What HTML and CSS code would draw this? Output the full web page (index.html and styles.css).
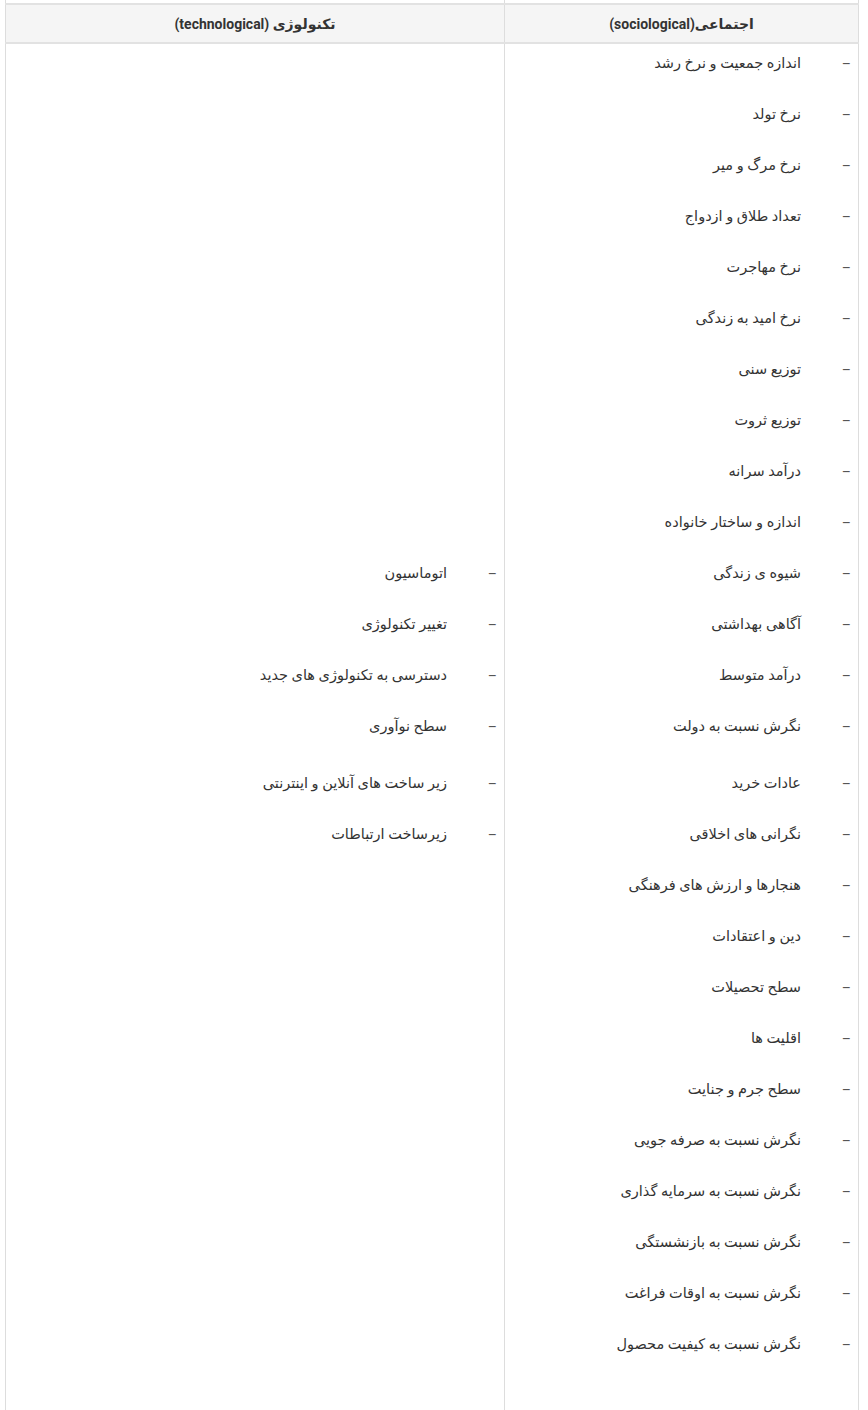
FILE: index.html
```html
<!DOCTYPE html>
<html lang="fa" dir="rtl">
<head>
<meta charset="utf-8">
<link rel="stylesheet" href="styles.css">
</head>
<body>
<div class="wrap">
<table class="pest">
  <tr class="prev"><td class="col-soc"></td><td class="col-tech"></td></tr>
  <tr class="head">
    <th class="col-soc">اجتماعی(sociological)</th>
    <th class="col-tech">تکنولوژی (technological)</th>
  </tr>
  <tr class="body">
    <td class="col-soc top">
      <ul class="list">
        <li>اندازه جمعیت و نرخ رشد</li>
        <li>نرخ تولد</li>
        <li>نرخ مرگ و میر</li>
        <li>تعداد طلاق و ازدواج</li>
        <li>نرخ مهاجرت</li>
        <li>نرخ امید به زندگی</li>
        <li>توزیع سنی</li>
        <li>توزیع ثروت</li>
        <li>درآمد سرانه</li>
        <li>اندازه و ساختار خانواده</li>
        <li>شیوه ی زندگی</li>
        <li>آگاهی بهداشتی</li>
        <li>درآمد متوسط</li>
        <li class="wide">نگرش نسبت به دولت</li>
        <li>عادات خرید</li>
        <li>نگرانی های اخلاقی</li>
        <li>هنجارها و ارزش های فرهنگی</li>
        <li>دین و اعتقادات</li>
        <li>سطح تحصیلات</li>
        <li>اقلیت ها</li>
        <li>سطح جرم و جنایت</li>
        <li>نگرش نسبت به صرفه جویی</li>
        <li>نگرش نسبت به سرمایه گذاری</li>
        <li>نگرش نسبت به بازنشستگی</li>
        <li>نگرش نسبت به اوقات فراغت</li>
        <li>نگرش نسبت به کیفیت محصول</li>
      </ul>
    </td>
    <td class="col-tech top">
      <ul class="list offset">
        <li>اتوماسیون</li>
        <li>تغییر تکنولوژی</li>
        <li>دسترسی به تکنولوژی های جدید</li>
        <li class="wide">سطح نوآوری</li>
        <li>زیر ساخت های آنلاین و اینترنتی</li>
        <li>زیرساخت ارتباطات</li>
      </ul>
    </td>
  </tr>
</table>
</div>
</body>
</html>
```
FILE: styles.css
```css
html, body {
  margin: 0;
  padding: 0;
  background: #fff;
}
.wrap {
  padding: 0 9px 0 5px;
  direction: ltr;
}
.pest {
  direction: rtl;
  width: 854px;
  border-collapse: collapse;
  font-family: Roboto, "DejaVu Sans", sans-serif;
  font-size: 14px;
  color: #333;
}
.pest td, .pest th {
  border-left: 1px solid #ddd;
  border-right: 1px solid #ddd;
  padding: 0;
}
.col-soc { width: 353px; }
.prev td {
  height: 3px;
}
.head th {
  height: 37px;
  background: #f5f5f5;
  border-top: 2px solid #e2e2e2;
  border-bottom: 2px solid #e2e2e2;
  font-weight: 700;
  text-align: center;
  vertical-align: middle;
}
.body td {
  vertical-align: top;
  height: 1380px;
}
.list {
  list-style: none;
  margin: 0;
  padding: 8px 7px 0 0;
  font-size: 14.5px;
}
.list.offset {
  padding-top: 518px;
}
.list li {
  display: flex;
  align-items: center;
  line-height: 24px;
  margin-bottom: 27px;
}
.list li::before {
  content: "–";
  font-size: 14px;
  color: #555;
  width: 8px;
  margin-left: 42px;
  text-align: center;
}
.list li.wide {
  margin-bottom: 33px;
}
```
